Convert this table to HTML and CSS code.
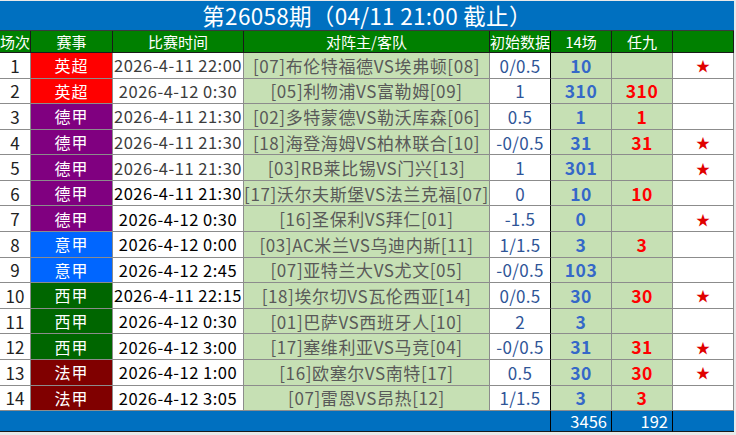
FILE: index.html
```html
<!DOCTYPE html>
<html lang="zh">
<head>
<meta charset="utf-8">
<link rel="stylesheet" href="styles.css">
</head>
<body>
<div class="sheet">
  <div class="title">第26058期（04/11 21:00 截止）</div>
  <div class="grid">
    <div class="h">场次</div><div class="h">赛事</div><div class="h">比赛时间</div><div class="h">对阵主/客队</div><div class="h thick">初始数据</div><div class="h">14场</div><div class="h">任九</div><div class="h"></div>

    <div class="c idx">1</div><div class="c lg epl">英超</div><div class="c tm grey">2026-4-11 22:00</div><div class="c mt">[07]布伦特福德VS埃弗顿[08]</div><div class="c init thick">0/0.5</div><div class="c p14">10</div><div class="c r9"></div><div class="c st">★</div>
    <div class="c idx">2</div><div class="c lg epl">英超</div><div class="c tm grey">2026-4-12 0:30</div><div class="c mt">[05]利物浦VS富勒姆[09]</div><div class="c init thick">1</div><div class="c p14">310</div><div class="c r9">310</div><div class="c st"></div>
    <div class="c idx">3</div><div class="c lg bl">德甲</div><div class="c tm grey">2026-4-11 21:30</div><div class="c mt">[02]多特蒙德VS勒沃库森[06]</div><div class="c init thick">0.5</div><div class="c p14">1</div><div class="c r9">1</div><div class="c st"></div>
    <div class="c idx">4</div><div class="c lg bl">德甲</div><div class="c tm grey">2026-4-11 21:30</div><div class="c mt">[18]海登海姆VS柏林联合[10]</div><div class="c init thick">-0/0.5</div><div class="c p14">31</div><div class="c r9">31</div><div class="c st">★</div>
    <div class="c idx">5</div><div class="c lg bl">德甲</div><div class="c tm grey">2026-4-11 21:30</div><div class="c mt">[03]RB莱比锡VS门兴[13]</div><div class="c init thick">1</div><div class="c p14">301</div><div class="c r9"></div><div class="c st">★</div>
    <div class="c idx">6</div><div class="c lg bl">德甲</div><div class="c tm">2026-4-11 21:30</div><div class="c mt">[17]沃尔夫斯堡VS法兰克福[07]</div><div class="c init thick">0</div><div class="c p14">10</div><div class="c r9">10</div><div class="c st"></div>
    <div class="c idx">7</div><div class="c lg bl">德甲</div><div class="c tm">2026-4-12 0:30</div><div class="c mt">[16]圣保利VS拜仁[01]</div><div class="c init thick">-1.5</div><div class="c p14">0</div><div class="c r9"></div><div class="c st">★</div>
    <div class="c idx">8</div><div class="c lg sa">意甲</div><div class="c tm">2026-4-12 0:00</div><div class="c mt">[03]AC米兰VS乌迪内斯[11]</div><div class="c init thick">1/1.5</div><div class="c p14">3</div><div class="c r9">3</div><div class="c st"></div>
    <div class="c idx">9</div><div class="c lg sa">意甲</div><div class="c tm">2026-4-12 2:45</div><div class="c mt">[07]亚特兰大VS尤文[05]</div><div class="c init thick">-0/0.5</div><div class="c p14">103</div><div class="c r9"></div><div class="c st"></div>
    <div class="c idx">10</div><div class="c lg ll">西甲</div><div class="c tm">2026-4-11 22:15</div><div class="c mt">[18]埃尔切VS瓦伦西亚[14]</div><div class="c init thick">0/0.5</div><div class="c p14">30</div><div class="c r9">30</div><div class="c st">★</div>
    <div class="c idx">11</div><div class="c lg ll">西甲</div><div class="c tm">2026-4-12 0:30</div><div class="c mt">[01]巴萨VS西班牙人[10]</div><div class="c init thick">2</div><div class="c p14">3</div><div class="c r9"></div><div class="c st"></div>
    <div class="c idx">12</div><div class="c lg ll">西甲</div><div class="c tm">2026-4-12 3:00</div><div class="c mt">[17]塞维利亚VS马竞[04]</div><div class="c init thick">-0/0.5</div><div class="c p14">31</div><div class="c r9">31</div><div class="c st">★</div>
    <div class="c idx">13</div><div class="c lg l1">法甲</div><div class="c tm">2026-4-12 1:00</div><div class="c mt">[16]欧塞尔VS南特[17]</div><div class="c init thick">0.5</div><div class="c p14">30</div><div class="c r9">30</div><div class="c st">★</div>
    <div class="c idx">14</div><div class="c lg l1">法甲</div><div class="c tm">2026-4-12 3:05</div><div class="c mt">[07]雷恩VS昂热[12]</div><div class="c init thick">1/1.5</div><div class="c p14">3</div><div class="c r9">3</div><div class="c st"></div>

    <div class="f wide thick"></div><div class="f num blk">3456</div><div class="f num blk">192</div><div class="f"></div>
  </div>
</div>
</body>
</html>
```
FILE: styles.css
```css
html, body {
  margin: 0;
  padding: 0;
  background: #e9e9e9;
}
.sheet {
  width: 734px;
  padding-top: 1px;
  font-family: "Noto Sans CJK SC", "Noto Sans", sans-serif;
}
.title {
  box-sizing: border-box;
  height: 30px;
  background: #0070c0;
  color: #fff;
  font-size: 22.5px;
  line-height: 29px;
  text-align: center;
  letter-spacing: 0.3px;
  border-bottom: 1px solid #3a3a3a;
}
.grid {
  display: grid;
  grid-template-columns: 31px 82px 131px 246px 61px 61px 61px 61px;
  grid-template-rows: 22px repeat(14, 25.58px) 21px;
  background: #fff;
}
.grid > div {
  box-sizing: border-box;
  display: flex;
  align-items: center;
  justify-content: center;
  white-space: nowrap;
  overflow: visible;
}
.h {
  background: #008000;
  color: #fff;
  font-size: 15px;
  border-right: 1px solid #1a1a1a;
  border-bottom: 1px solid #1a1a1a;
}
.c {
  border-right: 1px solid #8c8c8c;
  border-bottom: 1px solid #8c8c8c;
  font-size: 16.5px;
}
.idx {
  background: #fff;
  color: #222;
  font-size: 17px;
}
.lg {
  color: #fff;
  font-size: 16px;
  letter-spacing: 1px;
}
.epl { background: #ff0000; }
.bl { background: #800080; }
.sa { background: #0066ff; }
.ll { background: #006600; }
.l1 { background: #800000; }
.tm {
  background: #fff;
  color: #000;
  font-size: 16.5px;
  letter-spacing: 0.5px;
}
.tm.grey { color: #3c3c3c; }
.mt {
  background: #c6e0b4;
  color: #595959;
  font-size: 17px;
  letter-spacing: 0.6px;
}
.init {
  background: #fff;
  color: #2f5597;
  font-size: 17px;
  letter-spacing: 0.3px;
}
.grid > .thick { border-right: 1px solid #000; }
.p14 {
  background: #c6e0b4;
  color: #3568c8;
  font-weight: bold;
  font-size: 17.5px;
  letter-spacing: 0.5px;
}
.r9 {
  background: #c6e0b4;
  color: #ff0000;
  font-weight: bold;
  font-size: 17.5px;
  letter-spacing: 0.5px;
}
.st {
  background: #fff;
  color: #e00000;
  font-size: 14px;
}
.f {
  background: #0070c0;
  color: #fff;
  font-size: 16.5px;
  border-bottom: 1px solid #1a1a1a;
}
.grid > .wide {
  grid-column: span 5;
}
.grid > .blk { border-right: 1px solid #000; }
.grid > .num {
  justify-content: flex-end;
  padding-right: 4px;
}
```
